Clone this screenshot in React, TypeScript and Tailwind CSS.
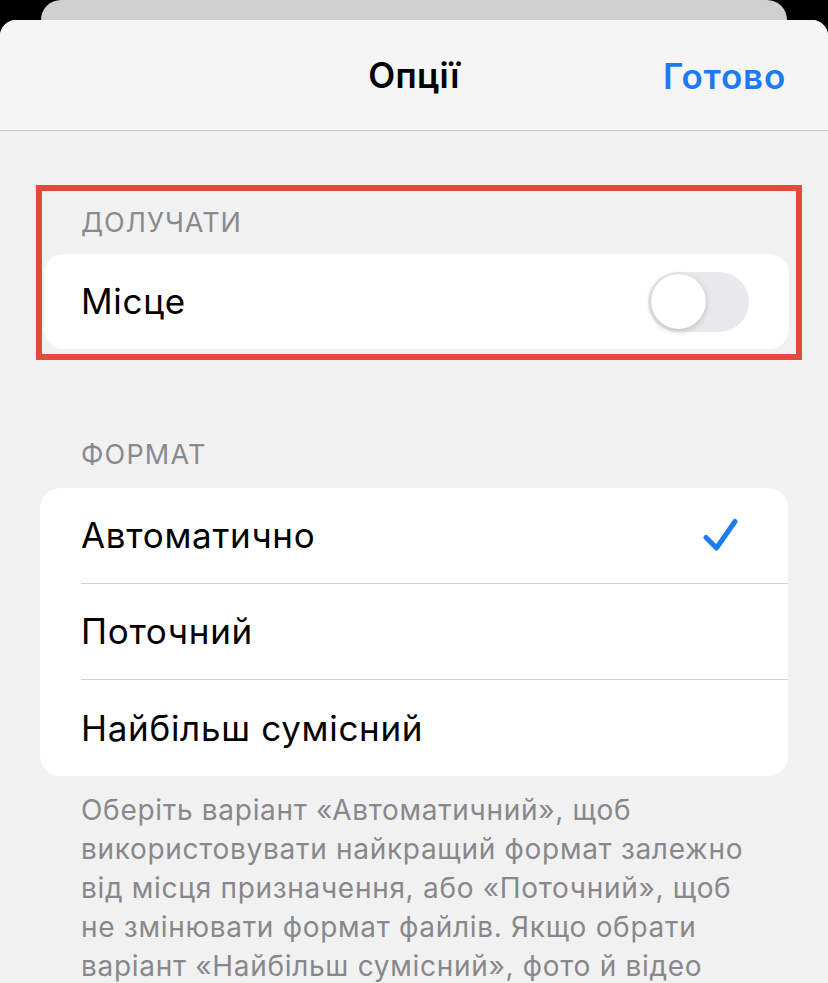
import { useState } from 'react';

const footer = [
  'Оберіть варіант «Автоматичний», щоб',
  'використовувати найкращий формат залежно',
  'від місця призначення, або «Поточний», щоб',
  'не змінювати формат файлів. Якщо обрати',
  'варіант «Найбільш сумісний», фото й відео',
  'буде надіслано в сумісному форматі, як-от JPEG',
];

const formats = ['Автоматично', 'Поточний', 'Найбільш сумісний'];

function Toggle({ on, onChange }: { on: boolean; onChange: () => void }) {
  return (
    <button
      onClick={onChange}
      className={`w-[101px] h-[60px] rounded-full p-[3px] flex items-center transition-colors ${on ? 'bg-[#34c759] justify-end' : 'bg-[#e9e9eb] justify-start'}`}
    >
      <span className="block w-[55px] h-[55px] rounded-full bg-white shadow-[0_2px_6px_rgba(0,0,0,0.18),0_0_1px_rgba(0,0,0,0.12)]" />
    </button>
  );
}

function Check() {
  return (
    <svg width="36" height="36" viewBox="0 0 36 36" fill="none">
      <path d="M4 19.5 L14.5 30 L33 3.5" stroke="#1a7cf0" strokeWidth="5" strokeLinecap="round" strokeLinejoin="round" />
    </svg>
  );
}

export default function App() {
  const [place, setPlace] = useState(false);
  const [fmt, setFmt] = useState(0);

  return (
    <div className="w-[828px] h-[983px] overflow-hidden bg-black font-['Inter','Noto_Sans',sans-serif]">
      <div className="mx-[41px] h-[20px] bg-[#cfcfcf] rounded-t-[22px]" />

      <div className="bg-[#f1f1f1] rounded-t-[16px] h-[963px]">
        <div className="relative h-[111px] bg-[#f5f5f5] rounded-t-[16px] flex items-center justify-center border-b border-[#c8c8ca]">
          <h1 className="text-[35px] font-semibold text-black tracking-[0.3px]">Опції</h1>
          <button className="absolute right-[42px] top-[30px] text-[35px] font-semibold text-[#1a7cf0] tracking-[0.8px]">
            Готово
          </button>
        </div>

        <div className="ml-[36px] w-[766px] mt-[54px] border-[6px] border-[#e34a3e] pl-[2px] pr-[7px] pb-[5px]">
          <div className="h-[63px] flex items-center pl-[37px] pt-[1px] text-[27px] text-[#8a8a8e] tracking-[1px]">ДОЛУЧАТИ</div>
          <div className="bg-white rounded-[20px] h-[95px] flex items-center justify-between pl-[37px] pr-[40px]">
            <span className="text-[35px] text-black tracking-[0.7px]">Місце</span>
            <Toggle on={place} onChange={() => setPlace(p => !p)} />
          </div>
        </div>

        <div className="h-[128px] flex items-end pb-[13px] pl-[81px] text-[27px] text-[#8a8a8e] tracking-[1.2px]">ФОРМАТ</div>

        <div className="ml-[40px] w-[748px] bg-white rounded-[20px] overflow-hidden">
          {formats.map((f, i) => (
            <button key={f} onClick={() => setFmt(i)} className="w-full h-[96px] flex items-stretch pl-[41px] text-left">
              <div className={`flex-1 flex items-center justify-between pr-[50px] ${i < formats.length - 1 ? 'border-b border-[#d1d1d6]' : ''}`}>
                <span className="text-[35px] text-black tracking-[0.7px]">{f}</span>
                {fmt === i && <Check />}
              </div>
            </button>
          ))}
        </div>

        <div className="pl-[81px] pt-[15px] text-[28px] leading-[39px] text-[#88888c] tracking-[0.7px]">
          {footer.map(l => (
            <div key={l} className="whitespace-nowrap">{l}</div>
          ))}
        </div>
      </div>
    </div>
  );
}
